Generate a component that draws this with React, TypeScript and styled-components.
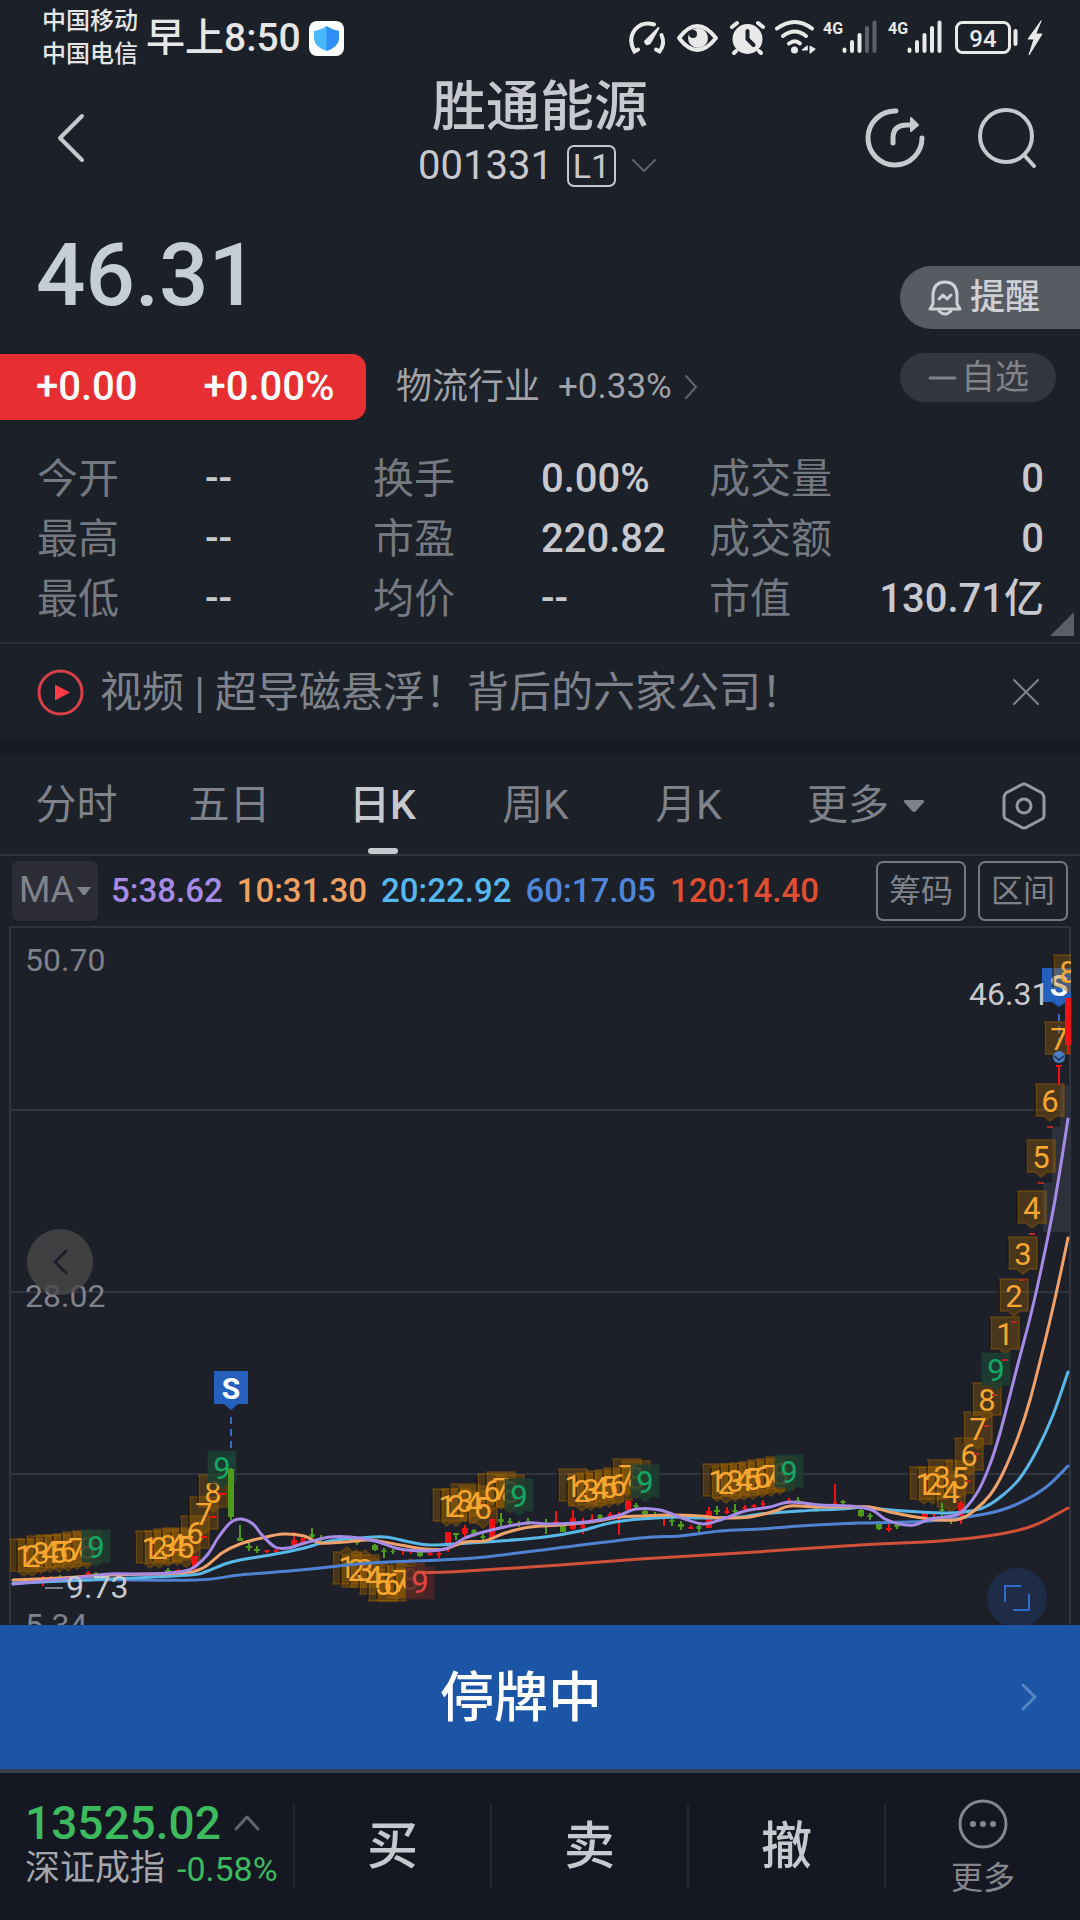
import React from "react";
import styled, { createGlobalStyle, css } from "styled-components";

const color = {
  page: "#1c2028",
  text: "#c8c9ce",
  label: "#747981",
  muted: "#7f828b",
  line: "#30343f",
  up: "#e62e33",
  down: "#3dba5e",
  blue: "#1c55a5",
};

const Global = createGlobalStyle`
  *, *::before, *::after { box-sizing: border-box; }
  body {
    margin: 0;
    background: ${color.page};
    color: ${color.text};
    font-family: Roboto, "Noto Sans CJK SC", sans-serif;
  }
  button {
    margin: 0;
    padding: 0;
    border: 0;
    background: none;
    color: inherit;
    font: inherit;
    line-height: 1.2;
    cursor: pointer;
  }
  dl, dt, dd, h1, p { margin: 0; font-weight: inherit; }
  svg { display: block; flex: none; }
`;

const Screen = styled.main`
  display: flex;
  flex-direction: column;
  min-height: 100vh;
`;

/* ---------- status bar ---------- */

const StatusBar = styled.div`
  display: flex;
  justify-content: space-between;
  align-items: center;
  height: 74px;
  padding: 2px 37px 0 42px;
  color: #e6e6e6;
`;
const StatusSide = styled.div`
  display: flex;
  align-items: center;
  gap: 8px;
`;
const Carriers = styled.div`
  font-size: 24px;
  line-height: 33px;
  font-weight: 500;
`;
const Clock = styled.time`
  font-size: 39px;
  line-height: 48px;
  font-weight: 500;
`;

/* ---------- header ---------- */

const Header = styled.header`
  display: grid;
  grid-template-columns: 1fr auto 1fr;
  align-items: center;
  height: 128px;
  padding: 0 43px;
`;
const IconButton = styled.button`
  display: grid;
  place-items: center;
`;
const HeaderActions = styled.div`
  display: flex;
  justify-content: flex-end;
  gap: 52px;
`;
const Heading = styled.div`
  align-self: start;
  display: flex;
  flex-direction: column;
  align-items: center;
  padding-top: 3px;
`;
const StockName = styled.h1`
  font-size: 54px;
  line-height: 62px;
  font-weight: 500;
`;
const CodeRow = styled.button`
  display: flex;
  align-items: center;
  gap: 14px;
  height: 54px;
  padding-right: 4px;
  font-size: 40px;
`;
const LevelTag = styled.span`
  width: 49px;
  height: 42px;
  border: 2px solid ${color.text};
  border-radius: 7px;
  font-size: 34px;
  line-height: 38px;
  text-align: center;
`;

/* ---------- quote ---------- */

const Quote = styled.section`
  display: flex;
  justify-content: space-between;
`;
const QuoteMain = styled.div`
  padding-top: 28px;
`;
const Price = styled.p`
  padding-left: 36px;
  color: #c5ced5;
  font-size: 87px;
  line-height: 90px;
  font-weight: 500;
`;
const ChangeRow = styled.div`
  display: flex;
  align-items: center;
  gap: 30px;
  margin-top: 34px;
`;
const Change = styled.p`
  display: flex;
  gap: 66px;
  width: 366px;
  padding-left: 36px;
  border-radius: 0 14px 14px 0;
  background: ${color.up};
  color: #fff;
  font-size: 40px;
  line-height: 66px;
  font-weight: 500;
`;
const Industry = styled.a`
  display: flex;
  align-items: center;
  gap: 18px;
  color: #a0a2a7;
  font-size: 36px;
  line-height: 48px;
  text-decoration: none;
`;
const IndustryChange = styled.span`
  display: flex;
  align-items: center;
  gap: 12px;
  font-size: 35px;
`;
const QuoteActions = styled.div`
  display: flex;
  flex-direction: column;
  gap: 24px;
  width: 180px;
  padding-top: 64px;
`;
const RemindButton = styled.button`
  display: flex;
  align-items: center;
  gap: 8px;
  height: 63px;
  padding-left: 28px;
  border-radius: 32px 0 0 32px;
  background: #595b63;
  color: #cfd0d4;
  font-size: 35px;
  font-weight: 500;
`;
const WatchButton = styled.button`
  display: flex;
  align-items: center;
  gap: 4px;
  width: 156px;
  height: 49px;
  padding-left: 28px;
  border-radius: 25px;
  background: #33373d;
  color: ${color.muted};
  font-size: 34px;
`;

/* ---------- statistics ---------- */

const Stats = styled.section`
  position: relative;
  margin-top: 29px;
  padding: 0 36px 13px 37px;
  border-bottom: 2px solid #2b2e37;
`;
const StatGrid = styled.dl`
  display: grid;
  grid-template-columns: 168fr 168fr 168fr 168fr 335fr;
  line-height: 60px;
`;
const StatLabel = styled.dt`
  color: ${color.label};
  font-size: 41px;
`;
const StatValue = styled.dd`
  font-size: 40px;
  font-weight: 500;
`;
const LastStat = styled.div`
  display: flex;
  justify-content: space-between;
`;
const Corner = styled.span`
  position: absolute;
  right: 6px;
  bottom: 6px;
  width: 24px;
  height: 24px;
  background: #5b5e66;
  clip-path: polygon(100% 0, 100% 100%, 0 100%);
`;

/* ---------- news ---------- */

const News = styled.section`
  display: flex;
  align-items: center;
  height: 111px;
  padding: 0 40px 0 37px;
  border-bottom: 15px solid #171b26;
`;
const NewsLink = styled.a`
  display: flex;
  flex: 1;
  align-items: center;
  gap: 16px;
  color: ${color.muted};
  font-size: 42px;
  line-height: 60px;
  text-decoration: none;
`;
const NewsTitle = styled.span`
  padding-top: 2px;
`;

/* ---------- tabs ---------- */

const Tabs = styled.nav`
  display: grid;
  grid-template-columns: repeat(5, 153fr) 202fr 113fr;
  height: 101px;
  border-bottom: 2px solid ${color.line};
`;
const Tab = styled.button<{ $active?: boolean }>`
  position: relative;
  display: flex;
  justify-content: center;
  align-items: center;
  gap: 14px;
  padding-top: 2px;
  color: ${color.muted};
  font-size: 41px;
  ${(p) =>
    p.$active &&
    css`
      color: ${color.text};
      font-weight: 500;
      &::after {
        content: "";
        position: absolute;
        bottom: 0;
        width: 30px;
        height: 6px;
        border-radius: 3px;
        background: ${color.text};
      }
    `}
`;

/* ---------- moving averages ---------- */

const Averages = styled.section`
  display: flex;
  align-items: center;
  height: 70px;
  padding: 0 12px;
`;
const MaButton = styled.button`
  display: flex;
  align-items: center;
  justify-content: center;
  gap: 3px;
  width: 86px;
  height: 60px;
  margin-right: 13px;
  border-radius: 7px;
  background: #2c2d36;
  color: ${color.muted};
  font-size: 36px;
`;
const MaList = styled.div`
  display: flex;
  flex: 1;
  gap: 14px;
`;
const MaValue = styled.span<{ $color: string }>`
  color: ${(p) => p.$color};
  font-size: 33px;
  line-height: 48px;
  font-weight: 500;
`;
const OutlineButton = styled.button`
  width: 90px;
  height: 60px;
  margin-left: 12px;
  border: 2px solid ${color.label};
  border-radius: 7px;
  color: ${color.muted};
  font-size: 32px;
`;

/* ---------- chart ---------- */

const ChartBox = styled.section`
  position: relative;
  overflow: hidden;
`;
const ChartSvg = styled.svg`
  width: 100%;
  height: auto;
`;
const RoundButton = styled.button<{ $size: number; $bg: string }>`
  position: absolute;
  display: grid;
  place-items: center;
  width: ${(p) => p.$size}px;
  height: ${(p) => p.$size}px;
  border-radius: 50%;
  background: ${(p) => p.$bg};
`;
const PrevButton = styled(RoundButton)`
  left: 27px;
  bottom: 330px;
`;
const ExpandButton = styled(RoundButton)`
  right: 33px;
  bottom: -3px;
`;

/* ---------- bottom ---------- */

const Suspended = styled.button`
  display: flex;
  align-items: center;
  height: 144px;
  padding: 0 42px 0 22px;
  background: ${color.blue};
  color: #fff;
  font-size: 54px;
  font-weight: 500;
`;
const SuspendedText = styled.span`
  flex: 1;
  padding-top: 4px;
`;
const BottomBar = styled.footer`
  display: grid;
  grid-template-columns: 295fr 197fr 197fr 197fr 194fr;
  align-items: center;
  height: 151px;
  padding-bottom: 2px;
  border-top: 4px solid #363d4b;
  background: #151822;
`;
const BarButton = styled.button`
  height: 84px;
  padding-top: 2px;
  border-right: 2px solid #242732;
  font-size: 51px;
  font-weight: 500;
`;
const IndexButton = styled(BarButton)`
  padding: 0 0 0 25px;
  text-align: left;
`;
const IndexValue = styled.span`
  display: flex;
  align-items: center;
  gap: 13px;
  margin-top: -4px;
  color: ${color.down};
  font-size: 46px;
  line-height: 46px;
`;
const IndexName = styled.span`
  display: flex;
  align-items: center;
  gap: 12px;
  color: #a5a6ab;
  font-size: 35px;
  line-height: 46px;
  font-weight: 400;
  white-space: nowrap;
`;
const IndexChange = styled.span`
  color: ${color.down};
  font-size: 34px;
`;
const MoreButton = styled.button`
  display: flex;
  flex-direction: column;
  align-items: center;
  gap: 8px;
  padding-top: 6px;
  color: #85868e;
  font-size: 32px;
  line-height: 42px;
`;

/* ---------- icons ---------- */

type ChevronProps = { w: number; h: number; d: string; stroke: string; sw?: number };
const Chevron = ({ w, h, d, stroke, sw = 3 }: ChevronProps) => (
  <svg width={w} height={h} viewBox={`0 0 ${w} ${h}`} fill="none" stroke={stroke} strokeWidth={sw} strokeLinecap="round" strokeLinejoin="round">
    <path d={d} />
  </svg>
);

const Shield = () => (
  <svg width="35" height="35" viewBox="0 0 35 35">
    <rect width="35" height="35" rx="8" fill="#fff" />
    <path d="M17.500 5 Q23 9 30 10 V18 Q29 26 17.500 30 Q6 26 5 18 V10 Q12 9 17.500 5Z" fill="#48bafb" />
    <path d="M17.500 5 Q23 9 30 10 V18 Q29 26 17.500 30Z" fill="#2f8df6" />
  </svg>
);

/* Speed gauge, eye, alarm, wifi, two signal meters, battery and charging bolt. */
const StatusIcons = () => (
  <svg width="414" height="46" viewBox="629 14 414 46" fill="none" stroke="#e9e9e9" strokeWidth="4" strokeLinecap="round" role="img" aria-label="系统状态">
    <path d="M654 23.500 Q643 20 635.500 28 Q627.500 38 634.500 50.500 L638 48.500" />
    <path d="M661.500 34 Q665.500 43 659.500 50.500 L656 48.500" />
    <path d="M658.500 27 L645 40.500 Q646 45 650 42Z" fill="#e9e9e9" strokeWidth="2" strokeLinejoin="round" />
    <path d="M679 37 Q697 13 716 37 Q697 61 679 37Z" strokeWidth="4" strokeLinejoin="round" />
    <circle cx="698" cy="37" r="10" fill="#e9e9e9" stroke="none" />
    <circle cx="693" cy="33" r="4" fill={color.page} stroke="none" />
    <circle cx="747.500" cy="38" r="15" fill="#e9e9e9" stroke="none" />
    <path d="M732 26 L737 22 M763 26 L758 22 M736 50 L734 52 M759 50 L761 52" strokeWidth="4" />
    <path d="M747.500 30 V38 L753.500 44" stroke={color.page} />
    <path d="M777 27.500 Q795 14.500 812 27.500" strokeWidth="4" />
    <path d="M783 35 Q795 26 806 35 M789 42.500 Q795 38 800 42.500" />
    <circle cx="794.500" cy="49" r="3.500" fill="#e9e9e9" stroke="none" />
    <path d="M807 45 L802 49 H807Z M810 52 V45 L815 48Z" fill="#e9e9e9" strokeWidth="1" />
    <g fontFamily="Roboto, sans-serif" fontSize="16" fontWeight="700" fill="#e9e9e9" stroke="none">
      <text x="823" y="33">4G</text>
      <text x="888" y="33">4G</text>
    </g>
    <path d="M844.500 48.500 V50 M852 41 V50 M859.500 34 V50 M909.500 48.500 V50 M917 41 V50 M924.500 34 V50 M932 27 V50 M939.500 21.500 V50" />
    <path d="M867 27 V50 M874.500 21.500 V50" stroke="#5d6065" />
    <rect x="956.500" y="21.500" width="53" height="30" rx="6" strokeWidth="3" />
    <path d="M1015.500 30 V43" />
    <text x="983" y="45.500" textAnchor="middle" fontFamily="Roboto, sans-serif" fontSize="24" fontWeight="500" fill="#e9e9e9" stroke="none">94</text>
    <path d="M1041 20 L1028 38 H1034 L1029 54 L1042 33 H1036Z" fill="#e9e9e9" stroke="#e9e9e9" strokeWidth="1" />
  </svg>
);

/* ---------- chart data ---------- */

type Point = [number, number];

const curves: { color: string; points: Point[] }[] = [
  { color: "#d0503a", points: [[418, 1572], [450, 1572], [560, 1565], [640, 1559], [740, 1553], [860, 1545], [940, 1541], [1000, 1534], [1035, 1525], [1068, 1508]] },
  { color: "#4f82d0", points: [[13, 1584], [80, 1580], [195, 1580], [240, 1575], [300, 1570], [370, 1563], [440, 1560], [485, 1557], [550, 1549], [640, 1538], [680, 1536], [720, 1531], [760, 1529], [800, 1526], [860, 1523], [930, 1521], [985, 1514], [1015, 1505], [1045, 1488], [1068, 1466]] },
  { color: "#5ab8e8", points: [[13, 1583], [110, 1579], [190, 1575], [205, 1572], [225, 1564], [240, 1560], [270, 1555], [300, 1549], [330, 1541], [360, 1538], [385, 1537], [410, 1542], [430, 1545], [470, 1543], [500, 1541], [545, 1537], [580, 1531], [610, 1523], [640, 1519], [680, 1517], [700, 1518], [740, 1517], [760, 1514], [800, 1511], [840, 1509], [865, 1507], [880, 1509], [920, 1512], [950, 1513], [970, 1511], [985, 1507], [1003, 1495], [1020, 1478], [1037, 1450], [1053, 1415], [1068, 1372]] },
  { color: "#f0a26b", points: [[13, 1580], [60, 1578], [110, 1575], [180, 1573], [203, 1568], [222, 1553], [240, 1544], [262, 1538], [283, 1534], [304, 1536], [320, 1543], [345, 1542], [370, 1540], [400, 1545], [425, 1549], [445, 1549], [465, 1542], [485, 1541], [505, 1533], [530, 1527], [560, 1525], [590, 1522], [620, 1517], [640, 1516], [670, 1515], [700, 1516], [720, 1518], [750, 1517], [775, 1511], [790, 1506], [820, 1507], [850, 1507], [870, 1507], [890, 1512], [910, 1516], [940, 1520], [960, 1519], [975, 1510], [990, 1495], [1003, 1473], [1018, 1437], [1030, 1400], [1047, 1333], [1058, 1285], [1068, 1238]] },
  { color: "#a58ae6", points: [[13, 1584], [43, 1581], [75, 1578], [110, 1574], [150, 1574], [185, 1571], [197, 1565], [208, 1554], [218, 1538], [230, 1523], [241, 1519], [253, 1524], [262, 1535], [275, 1547], [288, 1548], [305, 1543], [330, 1537], [350, 1537], [375, 1541], [400, 1549], [425, 1551], [440, 1550], [450, 1547], [465, 1538], [480, 1533], [500, 1528], [527, 1523], [550, 1524], [575, 1523], [600, 1520], [620, 1515], [636, 1509], [660, 1510], [685, 1519], [703, 1524], [720, 1520], [745, 1511], [770, 1507], [790, 1502], [820, 1505], [850, 1506], [872, 1510], [885, 1519], [900, 1524], [914, 1525], [930, 1519], [945, 1517], [960, 1513], [977, 1493], [989, 1467], [1000, 1433], [1019, 1360], [1031, 1314], [1041, 1270], [1055, 1200], [1068, 1119]] },
];

/* Catmull-Rom spline through the points, as cubic segments. */
const spline = (pts: Point[]) =>
  pts.slice(1).reduce((d, p, i) => {
    const a = pts[Math.max(i - 1, 0)];
    const b = pts[i];
    const c = pts[Math.min(i + 2, pts.length - 1)];
    return (
      d +
      `C${b[0] + (p[0] - a[0]) / 6} ${b[1] + (p[1] - a[1]) / 6} ` +
      `${p[0] - (c[0] - b[0]) / 6} ${p[1] - (c[1] - b[1]) / 6} ${p[0]} ${p[1]}`
    );
  }, `M${pts[0][0]} ${pts[0][1]}`);

type Badge = [string, number, number];
type Kind = "up" | "down";
const groups: { kind: Kind; badges: Badge[] }[] = [
  { kind: "up", badges: [["1", 24, 1556], ["2", 32, 1556], ["3", 41, 1553], ["4", 50, 1552], ["5", 59, 1552], ["6", 68, 1551], ["7", 77, 1549], ["8", 87, 1548], ["9", 96, 1547]] },
  { kind: "up", badges: [["1", 150, 1548], ["2", 159, 1548], ["3", 168, 1546], ["4", 177, 1545], ["5", 186, 1547], ["6", 195, 1533], ["7", 204, 1514], ["8", 213, 1492], ["9", 222, 1468]] },
  { kind: "down", badges: [["1", 347, 1567], ["2", 356, 1570], ["3", 365, 1570], ["4", 374, 1577], ["5", 383, 1584], ["6", 392, 1584], ["7", 401, 1581], ["8", 410, 1579], ["9", 420, 1582]] },
  { kind: "up", badges: [["1", 447, 1506], ["2", 456, 1506], ["3", 465, 1501], ["4", 474, 1503], ["5", 483, 1508], ["6", 492, 1491], ["7", 501, 1489], ["8", 510, 1492], ["9", 519, 1496]] },
  { kind: "up", badges: [["1", 573, 1486], ["2", 582, 1491], ["3", 591, 1490], ["4", 600, 1488], ["5", 609, 1487], ["6", 618, 1485], ["7", 627, 1476], ["8", 636, 1478], ["9", 645, 1482]] },
  { kind: "up", badges: [["1", 717, 1481], ["2", 726, 1483], ["3", 735, 1481], ["4", 744, 1480], ["5", 753, 1479], ["6", 762, 1477], ["7", 771, 1476], ["8", 780, 1474], ["9", 789, 1472]] },
  { kind: "up", badges: [["1", 924, 1484], ["2", 933, 1484], ["3", 942, 1477], ["4", 951, 1492], ["5", 960, 1478], ["6", 969, 1455], ["7", 978, 1429], ["8", 987, 1400], ["9", 996, 1370], ["1", 1005, 1334], ["2", 1014, 1296], ["3", 1023, 1254], ["4", 1032, 1208], ["5", 1041, 1157], ["6", 1050, 1101], ["7", 1059, 1039], ["8", 1068, 972]] },
];

const BadgeBox = ({ badge: [n, x, y], kind }: { badge: Badge; kind: Kind }) => {
  const nine = n === "9";
  const fill = !nine ? "#9d6100" : kind === "up" ? "#1d3f33" : "#4c2429";
  const s = kind === "up" ? 1 : -1;
  return (
    <g>
      <path
        d={`M${x - 14} ${y - 17 * s}H${x + 14}V${y + 15 * s}H${x + 6}L${x} ${y + 20 * s}L${x - 6} ${y + 15 * s}H${x - 14}Z`}
        fill={fill}
        fillOpacity={nine ? 0.85 : 0.35}
        stroke={fill}
        strokeOpacity="0.35"
        strokeWidth="2"
        strokeLinejoin="round"
      />
      {!nine && <path d={`M${x - 15} ${y - 15}V${y + 15}`} stroke="#15130f" strokeWidth="1" />}
    </g>
  );
};

const BadgeDigit = ({ badge: [n, x, y], kind }: { badge: Badge; kind: Kind }) => (
  <text x={x} y={y + 11} textAnchor="middle" fontSize="31" fill={n !== "9" ? "#f7a62f" : kind === "up" ? "#15a764" : "#e0453f"}>
    {n}
  </text>
);

/* Amber counts share one translucent stack; the closing nine covers it. */
const BadgeRun = ({ kind, badges }: { kind: Kind; badges: Badge[] }) => {
  const counts = badges.filter((b) => b[0] !== "9");
  const nines = badges.filter((b) => b[0] === "9");
  return (
    <g>
      {[counts, nines].map((set, i) => (
        <g key={i}>
          {set.map((b) => <BadgeBox key={b[1]} badge={b} kind={kind} />)}
          {set.map((b) => <BadgeDigit key={b[1]} badge={b} kind={kind} />)}
        </g>
      ))}
    </g>
  );
};

/* x, wick top, wick bottom, body top, body bottom, body width, r(ed) or g(reen) */
type Candle = [number, number, number, number, number, number, "r" | "g"];
const candles: Candle[] = [
  [43, 1576, 1586, 1580, 1582, 4, "r"], [51, 1576, 1582, 1578, 1580, 4, "r"], [60, 1575, 1580, 1577, 1579, 4, "g"],
  [88, 1571, 1576, 1573, 1575, 6, "r"], [96, 1572, 1576, 1573, 1575, 5, "g"],
  [168, 1568, 1573, 1570, 1572, 6, "g"], [178, 1569, 1573, 1570, 1572, 6, "r"],
  [195, 1556, 1570, 1556, 1567, 6, "r"], [204, 1536, 1538, 1536, 1538, 6, "r"], [213, 1516, 1518, 1516, 1518, 7, "r"], [222, 1493, 1495, 1493, 1495, 7, "r"],
  [231, 1468, 1520, 1469, 1517, 6, "g"], [240, 1525, 1541, 1538, 1541, 6, "g"], [249, 1543, 1551, 1546, 1548, 6, "g"], [257, 1546, 1553, 1549, 1551, 6, "g"],
  [267, 1550, 1553, 1550, 1552, 5, "r"], [276, 1549, 1553, 1550, 1552, 5, "r"], [294, 1532, 1546, 1540, 1545, 6, "r"], [303, 1538, 1544, 1538, 1543, 5, "r"],
  [312, 1528, 1538, 1534, 1537, 5, "g"], [321, 1535, 1543, 1538, 1540, 5, "g"], [340, 1536, 1542, 1538, 1540, 5, "g"], [357, 1540, 1545, 1541, 1543, 5, "g"],
  [375, 1544, 1551, 1545, 1550, 6, "g"], [384, 1548, 1558, 1550, 1552, 5, "g"], [393, 1549, 1554, 1551, 1552, 5, "g"], [403, 1548, 1555, 1549, 1551, 4, "r"], [411, 1550, 1554, 1550, 1551, 5, "r"],
  [420, 1549, 1557, 1551, 1556, 6, "g"], [430, 1552, 1556, 1553, 1555, 5, "r"], [439, 1550, 1558, 1553, 1555, 5, "r"],
  [448, 1532, 1552, 1532, 1544, 6, "r"], [456, 1533, 1540, 1533, 1535, 6, "g"], [465, 1525, 1538, 1528, 1534, 6, "r"], [474, 1529, 1537, 1530, 1535, 5, "g"], [483, 1534, 1542, 1536, 1538, 5, "g"],
  [492, 1519, 1538, 1519, 1538, 6, "r"], [501, 1513, 1526, 1519, 1522, 5, "g"], [510, 1518, 1526, 1521, 1523, 5, "g"], [519, 1521, 1527, 1523, 1525, 5, "g"], [528, 1518, 1525, 1521, 1523, 5, "g"],
  [546, 1519, 1534, 1523, 1525, 5, "g"], [556, 1511, 1524, 1521, 1523, 5, "r"], [563, 1524, 1532, 1526, 1532, 6, "g"], [573, 1510, 1530, 1518, 1529, 6, "r"], [583, 1518, 1534, 1525, 1528, 5, "r"],
  [592, 1514, 1522, 1519, 1521, 5, "r"], [600, 1514, 1520, 1515, 1519, 5, "g"], [610, 1512, 1518, 1514, 1517, 5, "r"], [619, 1512, 1535, 1516, 1518, 4, "r"], [628, 1500, 1512, 1501, 1510, 6, "r"],
  [636, 1503, 1509, 1505, 1507, 5, "g"], [645, 1508, 1518, 1511, 1514, 6, "g"], [655, 1512, 1518, 1514, 1517, 5, "g"], [664, 1514, 1526, 1517, 1519, 3, "r"], [672, 1518, 1526, 1520, 1522, 5, "g"],
  [681, 1521, 1530, 1524, 1527, 6, "g"], [691, 1525, 1529, 1527, 1529, 5, "r"], [699, 1524, 1532, 1526, 1529, 5, "g"], [709, 1507, 1528, 1511, 1528, 6, "r"],
  [717, 1506, 1515, 1510, 1512, 6, "g"], [727, 1507, 1514, 1511, 1513, 5, "r"], [735, 1504, 1513, 1510, 1512, 5, "g"], [745, 1505, 1511, 1507, 1509, 5, "r"], [754, 1504, 1510, 1505, 1507, 5, "r"], [763, 1500, 1507, 1503, 1505, 4, "r"], [789, 1498, 1504, 1500, 1503, 4, "r"], [798, 1497, 1504, 1500, 1502, 5, "g"],
  [807, 1503, 1508, 1504, 1507, 5, "g"], [816, 1506, 1512, 1508, 1510, 5, "g"], [835, 1484, 1504, 1502, 1504, 4, "r"], [843, 1500, 1505, 1501, 1503, 5, "g"],
  [861, 1509, 1517, 1510, 1516, 6, "g"], [870, 1513, 1520, 1515, 1517, 5, "g"], [879, 1521, 1530, 1523, 1529, 6, "g"], [889, 1524, 1532, 1528, 1530, 6, "r"], [897, 1522, 1529, 1524, 1527, 5, "g"],
  [925, 1511, 1520, 1512, 1519, 6, "r"], [934, 1512, 1518, 1513, 1515, 4, "r"], [942, 1503, 1516, 1509, 1511, 5, "g"], [951, 1517, 1524, 1519, 1521, 4, "g"], [961, 1501, 1524, 1503, 1516, 6, "r"],
  [1059, 1065, 1085, 1065, 1067, 6, "r"], [1068, 998, 1054, 998, 1045, 6, "r"],
];
/* Short closing-price ticks beside each rising badge. */
const ticks: Point[] = [[968, 1481], [977, 1454], [987, 1426], [995, 1395], [1005, 1360], [1014, 1322], [1022, 1280], [1032, 1234], [1041, 1183], [1050, 1127]];

const Chart = () => (
  <ChartSvg viewBox="0 926 1080 699" role="img" aria-label="日K线图" fontFamily='Roboto, "Noto Sans CJK SC", sans-serif'>
    <defs>
      <clipPath id="plot">
        <rect x="9" y="926" width="1062" height="699" />
      </clipPath>
    </defs>
    <rect x="10" y="927" width="1060" height="720" fill="#1e2029" stroke={color.line} strokeWidth="2" />
    <path d="M11 1110H1069M11 1292H1069M11 1474H1069" stroke={color.line} strokeWidth="2" />
    <path d="M1060 1085H1070V1232H1043V1183H1052V1127H1060Z" fill="#2d313c" />
    <g fontSize="32" fill={color.muted}>
      <text x="25" y="971">50.70</text>
      <text x="25" y="1307">28.02</text>
      <text x="25" y="1636">5.34</text>
    </g>
    <g clipPath="url(#plot)">
      <g fill="#2560bd">
        <path d="M214 1371H248V1404H238L231 1410L224 1404H214Z" />
        <path d="M1042 968H1076V1002H1066L1059 1007L1052 1002H1042Z" />
      </g>
      <path d="M231 1417V1452M1059 1014V1050" stroke="#3a6fc0" strokeWidth="2" strokeDasharray="7 5" />
      <g fontSize="30" fontWeight="700" fill="#fff" textAnchor="middle">
        <text x="231" y="1399">S</text>
        <text x="1059" y="996">S</text>
      </g>
      <circle cx="231" cy="1460" r="5" fill="#1d4d6c" />
      {groups.map((g, i) => (
        <BadgeRun key={i} {...g} />
      ))}
      {candles.map(([x, wt, wb, bt, bb, w, c]) => (
        <g key={x} fill={c === "r" ? "#ee1216" : "#4f9a1c"}>
          <rect x={x - 1} y={wt} width="2" height={wb - wt} />
          <rect x={x - w / 2} y={bt} width={w} height={bb - bt} />
        </g>
      ))}
      {ticks.map(([x, y]) => (
        <path key={x} d={`M${x - 3} ${y}H${x + 3}`} stroke="#b02a22" strokeWidth="2" />
      ))}
      <circle cx="1059" cy="1057" r="6" fill="#4a7fc4" />
      <path d="M1054 1056L1059 1060L1064 1056" fill="none" stroke="#23406b" strokeWidth="2" />
      {curves.map((c) => (
        <path key={c.color} d={spline(c.points)} fill="none" stroke={c.color} strokeWidth="3" strokeLinecap="round" strokeLinejoin="round" />
      ))}
    </g>
    <path d="M45 1588H63" stroke="#7b7e86" strokeWidth="2" />
    <g fontSize="32" fill={color.text}>
      <text x="66" y="1598">9.73</text>
      <text x="969" y="1005">46.31</text>
    </g>
  </ChartSvg>
);

/* ---------- page ---------- */

const stats = [
  ["今开", "--", "换手", "0.00%", "成交量", "0"],
  ["最高", "--", "市盈", "220.82", "成交额", "0"],
  ["最低", "--", "均价", "--", "市值", "130.71亿"],
];
const averages = [
  ["5:38.62", "#a58ae6"],
  ["10:31.30", "#f0a060"],
  ["20:22.92", "#55b8ee"],
  ["60:17.05", "#4f86d8"],
  ["120:14.40", "#e04e32"],
];

export default function App() {
  return (
    <Screen>
      <Global />
      <StatusBar>
        <StatusSide>
          <Carriers>
            <div>中国移动</div>
            <div>中国电信</div>
          </Carriers>
          <Clock>早上8:50</Clock>
          <Shield />
        </StatusSide>
        <StatusIcons />
      </StatusBar>

      <Header>
        <StatusSide>
          <IconButton aria-label="返回">
            <Chevron w={58} h={50} d="M39 3L17 25L39 47" stroke={color.text} sw={4} />
          </IconButton>
        </StatusSide>
        <Heading>
          <StockName>胜通能源</StockName>
          <CodeRow>
            <span>001331</span>
            <LevelTag>L1</LevelTag>
            <Chevron w={28} h={16} d="M3 2L14 13L25 2" stroke="#5f636b" sw={2} />
          </CodeRow>
        </Heading>
        <HeaderActions>
          <IconButton aria-label="分享">
            <svg width="60" height="60" viewBox="0 0 60 60" fill="none" stroke={color.text} strokeWidth="5" strokeLinecap="round">
              <path d="M31 3A27 27 0 1 0 57 30" />
              <path d="M28 35V30Q28 17 42 17H50" />
              <path d="M46 10L53 17L46 23Z" fill={color.text} strokeWidth="2" strokeLinejoin="round" />
            </svg>
          </IconButton>
          <IconButton aria-label="搜索">
            <svg width="60" height="60" viewBox="0 0 60 60" fill="none" stroke={color.text} strokeWidth="4" strokeLinecap="round">
              <circle cx="29" cy="28" r="26" />
              <path d="M48 48L57 58" />
            </svg>
          </IconButton>
        </HeaderActions>
      </Header>

      <Quote>
        <QuoteMain>
          <Price>46.31</Price>
          <ChangeRow>
            <Change>
              <span>+0.00</span>
              <span>+0.00%</span>
            </Change>
            <Industry href="#industry">
              物流行业
              <IndustryChange>
                +0.33%
                <Chevron w={14} h={26} d="M2 2L12 13L2 24" stroke="#61656d" sw={2} />
              </IndustryChange>
            </Industry>
          </ChangeRow>
        </QuoteMain>
        <QuoteActions>
          <RemindButton>
            <svg width="34" height="36" viewBox="0 0 34 36" fill="none" stroke="#cfd0d4" strokeWidth="3" strokeLinecap="round" strokeLinejoin="round">
              <path d="M2 29L5 24V14Q6 2 17 2Q28 2 29 14V24L32 29Z" />
              <path d="M11 31Q17 37 23 31" />
              <path d="M11 19L15 15L19 19L23 15" />
            </svg>
            提醒
          </RemindButton>
          <WatchButton>
            <Chevron w={29} h={4} d="M2 2H27" stroke={color.muted} />
            自选
          </WatchButton>
        </QuoteActions>
      </Quote>

      <Stats>
        {stats.map((s) => (
          <StatGrid key={s[4]}>
            <StatLabel>{s[0]}</StatLabel>
            <StatValue>{s[1]}</StatValue>
            <StatLabel>{s[2]}</StatLabel>
            <StatValue>{s[3]}</StatValue>
            <LastStat>
              <StatLabel>{s[4]}</StatLabel>
              <StatValue>{s[5]}</StatValue>
            </LastStat>
          </StatGrid>
        ))}
        <Corner />
      </Stats>

      <News>
        <NewsLink href="#video">
          <svg width="47" height="47" viewBox="0 0 47 47">
            <circle cx="23.500" cy="23.500" r="21.500" fill="none" stroke="#d9404a" strokeWidth="3" />
            <path d="M18 15.500L33 23.500L18 31.500Z" fill="#ff3b44" />
          </svg>
          <NewsTitle>视频 | 超导磁悬浮！背后的六家公司！</NewsTitle>
        </NewsLink>
        <IconButton aria-label="关闭">
          <Chevron w={28} h={28} d="M2 2L26 26M26 2L2 26" stroke={color.muted} sw={2} />
        </IconButton>
      </News>

      <Tabs>
        <Tab>分时</Tab>
        <Tab>五日</Tab>
        <Tab $active>日K</Tab>
        <Tab>周K</Tab>
        <Tab>月K</Tab>
        <Tab>
          更多
          <svg width="22" height="14" viewBox="0 0 22 14">
            <path d="M2 1H20Q22 2 21 3L13 12Q11 14 9 12L1 3Q0 2 2 1Z" fill={color.muted} />
          </svg>
        </Tab>
        <Tab aria-label="设置">
          <svg width="44" height="48" viewBox="0 0 44 48" fill="none" stroke="#96999f" strokeWidth="3">
            <path d="M19 3Q22 1 25 3L40 11Q42 13 42 16V33Q42 36 40 37L25 45Q22 47 19 45L4 37Q2 36 2 33V16Q2 13 4 11Z" />
            <circle cx="22" cy="24" r="7" />
          </svg>
        </Tab>
      </Tabs>

      <Averages>
        <MaButton>
          MA
          <svg width="14" height="10" viewBox="0 0 14 10">
            <path d="M0 1H14L8 9H6Z" fill={color.muted} />
          </svg>
        </MaButton>
        <MaList>
          {averages.map(([t, c]) => (
            <MaValue key={t} $color={c}>{t}</MaValue>
          ))}
        </MaList>
        <OutlineButton>筹码</OutlineButton>
        <OutlineButton>区间</OutlineButton>
      </Averages>

      <ChartBox>
        <Chart />
        <PrevButton $size={66} $bg="rgba(72, 72, 74, 0.8)" aria-label="更早">
          <Chevron w={20} h={28} d="M16 3L5 14L16 25" stroke="#1e2029" />
        </PrevButton>
        <ExpandButton $size={60} $bg="#1f2c47" aria-label="全屏">
          <svg width="28" height="28" viewBox="0 0 28 28" fill="none" stroke="#2f6cc9" strokeWidth="2">
            <path d="M2 18V2H18M26 10V26H10" />
          </svg>
        </ExpandButton>
      </ChartBox>

      <Suspended>
        <SuspendedText>停牌中</SuspendedText>
        <Chevron w={18} h={28} d="M3 2L15 14L3 26" stroke="#5585c4" />
      </Suspended>

      <BottomBar>
        <IndexButton>
          <IndexValue>
            13525.02
            <Chevron w={26} h={16} d="M2 14L13 2L24 14" stroke="#63646d" />
          </IndexValue>
          <IndexName>
            深证成指
            <IndexChange>-0.58%</IndexChange>
          </IndexName>
        </IndexButton>
        <BarButton>买</BarButton>
        <BarButton>卖</BarButton>
        <BarButton>撤</BarButton>
        <MoreButton>
          <svg width="50" height="50" viewBox="0 0 50 50" fill="#85868e">
            <circle cx="25" cy="25" r="23" fill="none" stroke="#85868e" strokeWidth="3" />
            <circle cx="15" cy="25" r="3" />
            <circle cx="25" cy="25" r="3" />
            <circle cx="35" cy="25" r="3" />
          </svg>
          更多
        </MoreButton>
      </BottomBar>
    </Screen>
  );
}
